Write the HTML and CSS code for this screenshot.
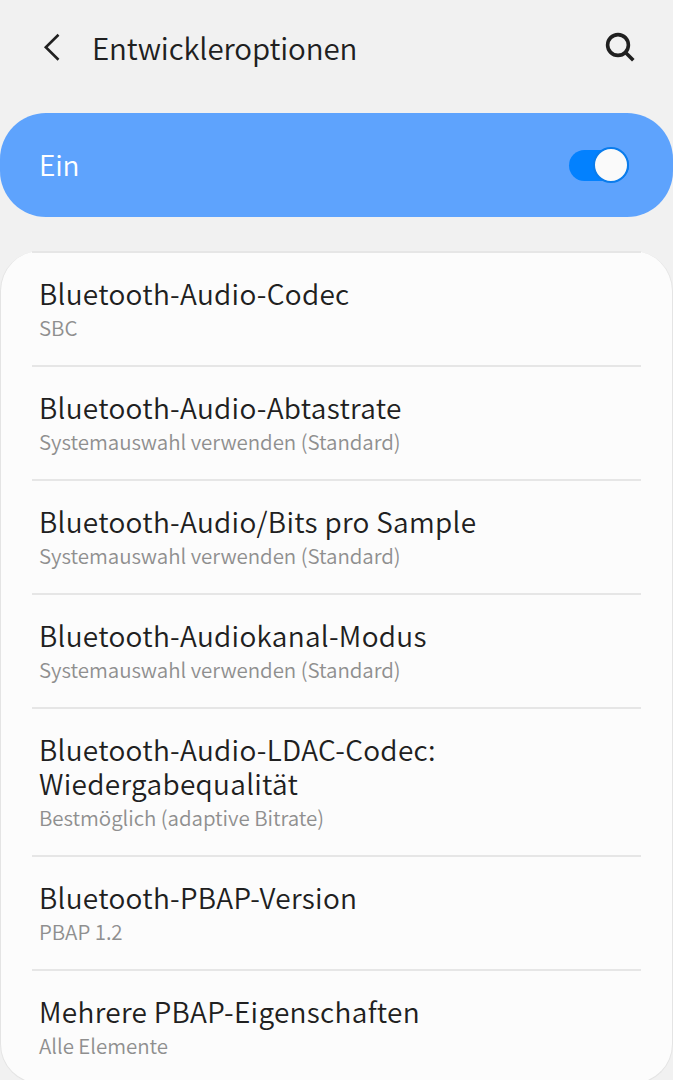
FILE: index.html
```
<!DOCTYPE html>
<html lang="de">
<head>
    <meta charset="UTF-8">
    <meta name="viewport" content="width=device-width, initial-scale=1.0">
    <title>Entwickleroptionen</title>
    <link rel="stylesheet" href="styles.css">
</head>
<body>
    <header class="top-bar">
        <svg class="back-icon" viewBox="0 0 20 30" width="20" height="30">
            <path d="M17.5 1.8 L4.8 14.3 L17.5 26.8" />
        </svg>
        <h1 class="page-title">Entwickleroptionen</h1>
        <svg class="search-icon" viewBox="0 0 32 32" width="32" height="32">
            <circle cx="14" cy="13" r="10.4" />
            <path d="M21.5 20.5 L29.3 28.3" />
        </svg>
    </header>

    <div class="switch-bar">
        <span class="switch-label">Ein</span>
        <div class="toggle">
            <div class="toggle-knob"></div>
        </div>
    </div>

    <!-- Bluetooth-Einstellungen -->
    <main class="card">
        <div class="option">
            <h2 class="option-title">Bluetooth-Audio-Codec</h2>
            <p class="option-value">SBC</p>
        </div>
        <div class="option">
            <h2 class="option-title">Bluetooth-Audio-Abtastrate</h2>
            <p class="option-value">Systemauswahl verwenden (Standard)</p>
        </div>
        <div class="option">
            <h2 class="option-title">Bluetooth-Audio/Bits pro Sample</h2>
            <p class="option-value">Systemauswahl verwenden (Standard)</p>
        </div>
        <div class="option">
            <h2 class="option-title">Bluetooth-Audiokanal-Modus</h2>
            <p class="option-value">Systemauswahl verwenden (Standard)</p>
        </div>
        <div class="option">
            <h2 class="option-title">Bluetooth-Audio-LDAC-Codec: Wiedergabequalität</h2>
            <p class="option-value">Bestmöglich (adaptive Bitrate)</p>
        </div>
        <div class="option">
            <h2 class="option-title">Bluetooth-PBAP-Version</h2>
            <p class="option-value">PBAP 1.2</p>
        </div>
        <div class="option">
            <h2 class="option-title">Mehrere PBAP-Eigenschaften</h2>
            <p class="option-value">Alle Elemente</p>
        </div>
    </main>
</body>
</html>
```
FILE: styles.css
```
* {
    box-sizing: border-box;
}
body {
    font-family: "Noto Sans CJK SC", "Noto Sans", sans-serif;
    font-weight: 350;
    background-color: #f1f1f1;
    color: #202020;
    margin: 0;
    height: 100vh;
    overflow: hidden;
}
h1, h2, p {
    margin: 0;
    font-weight: inherit;
}
.top-bar {
    display: flex;
    align-items: center;
    height: 95px;
    padding: 0 37px 0 41px;
}
.back-icon,
.search-icon {
    fill: none;
    stroke: #202020;
}
.back-icon {
    stroke-width: 2.6;
}
.search-icon {
    stroke-width: 3.6;
    margin-left: auto;
}
.page-title {
    font-size: 29.5px;
    line-height: 36px;
    margin-left: 31px;
    padding-bottom: 2px;
    letter-spacing: -0.12px;
}
.switch-bar {
    display: flex;
    align-items: center;
    justify-content: space-between;
    height: 104px;
    margin-top: 18px;
    padding: 0 44px 0 39px;
    border-radius: 46px;
    background-color: #5ea3fd;
}
.switch-label {
    color: #fff;
    font-size: 28px;
    line-height: 34px;
    padding-bottom: 2px;
    letter-spacing: -0.2px;
}
.toggle {
    display: flex;
    align-items: center;
    justify-content: flex-end;
    width: 60px;
    height: 31px;
    border-radius: 16px;
    background-color: #0381fe;
}
.toggle-knob {
    flex: none;
    width: 36px;
    height: 36px;
    border: 2px solid #0a7cec;
    border-radius: 50%;
    background-color: #fafafa;
}
.card {
    margin-top: 34px;
    padding: 0 31px;
    border: 1px solid #e4e4e4;
    border-top: none;
    border-radius: 40px;
    background-color: #fcfcfc;
}
.option {
    padding: 23px 8px 22px 7px;
    border-top: 2px solid #e6e6e6;
}
.option-title {
    max-width: 480px;
    font-size: 28px;
    line-height: 34px;
    letter-spacing: 0.3px;
}
.option-value {
    color: #8f8f8f;
    font-size: 20.5px;
    line-height: 31px;
    margin-top: 2px;
    letter-spacing: -0.05px;
}
```
